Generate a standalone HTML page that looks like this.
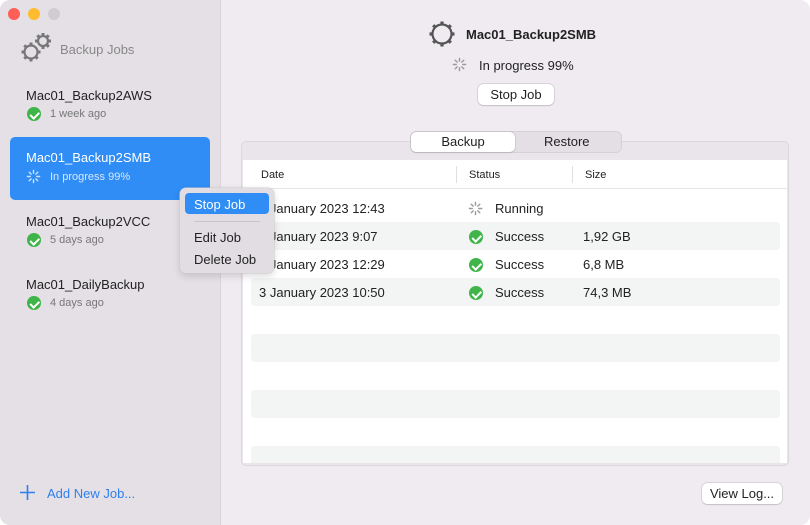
<!DOCTYPE html>
<html><head><meta charset="utf-8"><style>
*{margin:0;padding:0;box-sizing:border-box}
body{width:810px;height:525px;overflow:hidden;font-family:"Liberation Sans",sans-serif;background:#fff}
.win{position:absolute;left:0;top:0;width:810px;height:525px;background:#efebf0;border-radius:10px;overflow:hidden}
.side{position:absolute;left:0;top:0;width:221px;height:525px;background:#e4e0e5;border-right:1px solid #d8d4d9}
.dot{position:absolute;top:8px;width:12px;height:12px;border-radius:50%}
.t{position:absolute;white-space:nowrap}
.item .n{font-size:13px;color:#222}
.sub{font-size:11px;color:#777}
.chk{position:absolute;width:14px;height:14px;border-radius:50%;background:#3fb549}
.chk:after{content:"";position:absolute;left:4.5px;top:2.5px;width:3.5px;height:6.5px;border:solid #fff;border-width:0 2px 2px 0;transform:rotate(45deg)}
.btn{position:absolute;background:#fff;border-radius:5px;box-shadow:0 0 0 .5px #bbb,0 1px 1px rgba(0,0,0,.15);font-size:13px;color:#222;text-align:center}
.row{position:absolute;left:251px;width:529px;height:28px;border-radius:4px}
.g{background:#f3f4f4}
.cell{position:absolute;font-size:13px;color:#222;white-space:nowrap}
</style></head><body>
<div class="win">
<div class="side">
<div class="dot" style="left:8px;background:#fe5f57"></div>
<div class="dot" style="left:28px;background:#febc2e"></div>
<div class="dot" style="left:48px;background:#d0ccd1"></div>
<svg style="position:absolute;left:18px;top:30px" width="36" height="36" viewBox="0 0 36 36">
<g fill="none" stroke="#777" stroke-width="2.2"><circle cx="13" cy="22" r="6.5"/><circle cx="25" cy="11" r="5"/></g>
<g stroke="#777" stroke-width="3"><path d="M13 12.5v3M13 28.5v3M3.5 22h3M19.5 22h3M6.3 15.3l2.2 2.2M17.5 26.5l2.2 2.2M6.3 28.7l2.2-2.2M25 3v2.5M25 16.5v2.5M17 11h2.5M30.5 11h2.5M19.3 5.3l1.8 1.8M29 15l1.8 1.8M30.7 5.3l-1.8 1.8"/></g></svg>
<div class="t" style="left:60px;top:42px;font-size:13px;color:#888">Backup Jobs</div>
<div class="t item" style="left:26px;top:87px"><span class="n">Mac01_Backup2AWS</span></div>
<div class="chk" style="left:27px;top:107px"></div><div class="t sub" style="left:50px;top:108px">1 week ago</div>
<div style="position:absolute;left:10px;top:137px;width:200px;height:63px;background:#2f8df5;border-radius:5px"></div>
<div class="t" style="left:26px;top:150px;font-size:13px;color:#fff">Mac01_Backup2SMB</div>
<svg style="position:absolute;left:26px;top:169px" width="15" height="15" viewBox="0 0 16 16"><g stroke="#cfe3fd" stroke-width="1.5" stroke-linecap="round"><path d="M8 1.5v3M8 11.5v3M1.5 8h3M11.5 8h3M3.4 3.4l2.1 2.1M10.5 10.5l2.1 2.1M3.4 12.6l2.1-2.1M10.5 5.5l2.1-2.1"/></g></svg>
<div class="t" style="left:50px;top:171px;font-size:11px;color:#d8e8fd">In progress 99%</div>
<div class="t item" style="left:26px;top:213px"><span class="n">Mac01_Backup2VCC</span></div>
<div class="chk" style="left:27px;top:233px"></div><div class="t sub" style="left:50px;top:234px">5 days ago</div>
<div class="t item" style="left:26px;top:276px"><span class="n">Mac01_DailyBackup</span></div>
<div class="chk" style="left:27px;top:296px"></div><div class="t sub" style="left:50px;top:297px">4 days ago</div>
<svg style="position:absolute;left:19px;top:484px" width="17" height="17" viewBox="0 0 17 17"><path d="M8.5 1v15M1 8.5h15" stroke="#2f7ff0" stroke-width="1.6"/></svg>
<div class="t" style="left:47px;top:486px;font-size:13px;color:#2f7ff0">Add New Job...</div>
</div>
<svg style="position:absolute;left:427px;top:19px" width="30" height="30" viewBox="0 0 30 30"><circle cx="15" cy="15" r="9.5" fill="none" stroke="#555" stroke-width="2.2"/><g stroke="#555" stroke-width="3.2"><path d="M15 2.5v4M15 23.5v4M2.5 15h4M23.5 15h4M6.2 6.2l2.8 2.8M21 21l2.8 2.8M6.2 23.8l2.8-2.8M21 9l2.8-2.8"/></g></svg>
<div class="t" style="left:466px;top:27px;font-size:13px;font-weight:bold;color:#222">Mac01_Backup2SMB</div>
<svg style="position:absolute;left:452px;top:57px" width="15" height="15" viewBox="0 0 16 16"><g stroke="#999" stroke-width="1.5" stroke-linecap="round"><path d="M8 1.5v3M8 11.5v3M1.5 8h3M11.5 8h3M3.4 3.4l2.1 2.1M10.5 10.5l2.1 2.1M3.4 12.6l2.1-2.1M10.5 5.5l2.1-2.1"/></g></svg>
<div class="t" style="left:479px;top:58px;font-size:13px;color:#222">In progress 99%</div>
<div class="btn" style="left:478px;top:84px;width:76px;height:21px;line-height:21px">Stop Job</div>
<div style="position:absolute;left:241px;top:141px;width:548px;height:325px;border:1px solid #dcd7dc;border-radius:5px;background:#e9e5ea"></div>
<div style="position:absolute;left:243px;top:160px;width:544px;height:303px;background:#fff"></div>
<div style="position:absolute;left:410px;top:131px;width:212px;height:22px;background:#e3dfe4;border-radius:6px;border:1px solid #d5d1d6"></div>
<div class="btn" style="left:411px;top:132px;width:104px;height:20px;line-height:20px">Backup</div>
<div class="t" style="left:544px;top:134px;font-size:13px;color:#222">Restore</div>
<div class="cell" style="left:261px;top:169px;font-size:11px">Date</div>
<div class="cell" style="left:469px;top:169px;font-size:11px">Status</div>
<div class="cell" style="left:585px;top:169px;font-size:11px">Size</div>
<div style="position:absolute;left:456px;top:166px;width:1px;height:17px;background:#e0e0e0"></div>
<div style="position:absolute;left:572px;top:166px;width:1px;height:17px;background:#e0e0e0"></div>
<div style="position:absolute;left:243px;top:188px;width:544px;height:1px;background:#e5e5e5"></div>
<div class="row g" style="top:222px"></div>
<div class="row g" style="top:278px"></div>
<div class="row g" style="top:334px"></div>
<div class="row g" style="top:390px"></div>
<div class="row g" style="top:446px;height:17px;border-radius:4px 4px 0 0"></div>
<div class="cell" style="left:259px;top:201px">3 January 2023 12:43</div>
<div class="cell" style="left:259px;top:229px">3 January 2023 9:07</div>
<div class="cell" style="left:259px;top:257px">3 January 2023 12:29</div>
<div class="cell" style="left:259px;top:285px">3 January 2023 10:50</div>
<svg style="position:absolute;left:468px;top:201px" width="15" height="15" viewBox="0 0 16 16"><g stroke="#999" stroke-width="1.5" stroke-linecap="round"><path d="M8 1.5v3M8 11.5v3M1.5 8h3M11.5 8h3M3.4 3.4l2.1 2.1M10.5 10.5l2.1 2.1M3.4 12.6l2.1-2.1M10.5 5.5l2.1-2.1"/></g></svg>
<div class="cell" style="left:495px;top:201px">Running</div>
<div class="chk" style="left:469px;top:230px"></div><div class="cell" style="left:495px;top:229px">Success</div><div class="cell" style="left:583px;top:229px">1,92 GB</div>
<div class="chk" style="left:469px;top:258px"></div><div class="cell" style="left:495px;top:257px">Success</div><div class="cell" style="left:583px;top:257px">6,8 MB</div>
<div class="chk" style="left:469px;top:286px"></div><div class="cell" style="left:495px;top:285px">Success</div><div class="cell" style="left:583px;top:285px">74,3 MB</div>
<div style="position:absolute;left:180px;top:188px;width:94px;height:85px;background:#e2dde3;border-radius:6px;box-shadow:0 0 0 .5px #ccc,0 3px 8px rgba(0,0,0,.15)"></div>
<div style="position:absolute;left:185px;top:193px;width:84px;height:21px;background:#2f8df5;border-radius:4px"></div>
<div class="t" style="left:194px;top:197px;font-size:13px;color:#fff">Stop Job</div>
<div style="position:absolute;left:194px;top:221px;width:66px;height:1px;background:#c8c4c9"></div>
<div class="t" style="left:194px;top:230px;font-size:13px;color:#222">Edit Job</div>
<div class="t" style="left:194px;top:252px;font-size:13px;color:#222">Delete Job</div>
<div class="btn" style="left:702px;top:483px;width:80px;height:21px;line-height:21px">View Log...</div>
</div>
</body></html>
